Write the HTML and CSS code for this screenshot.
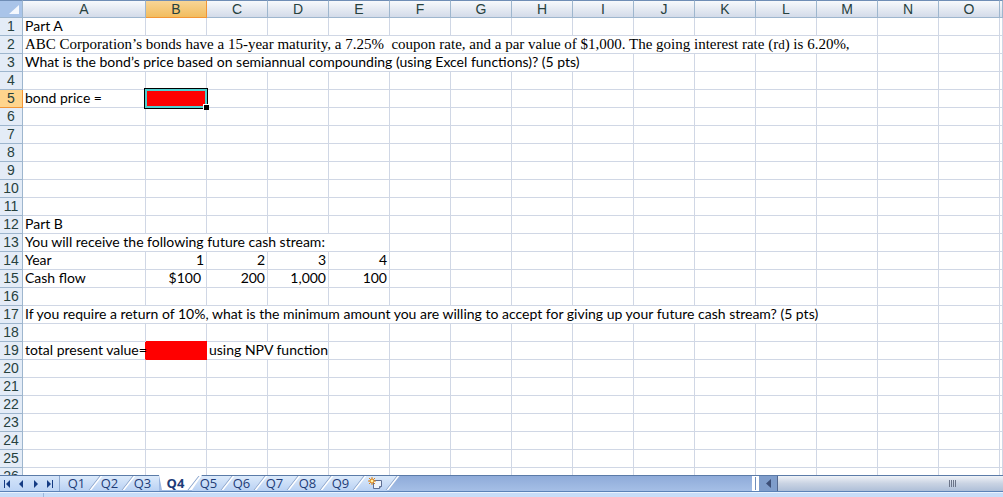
FILE: index.html
```
<!DOCTYPE html>
<html lang="en">
<head>
    <meta charset="UTF-8">
    <meta name="viewport" content="width=device-width, initial-scale=1.0">
    <title>Q4</title>
    <link rel="stylesheet" href="styles.css">
</head>
<body>
<div class="sheet">
    <table>
        <colgroup>
            <col class="col-num">
            <col class="col-first">
            <col span="14" class="col-cell">
            <col>
        </colgroup>
        <thead>
        <tr id="columnHeads">
            <th class="corner"><svg viewBox="0 0 10 9"><path d="M10 0V9H0Z" fill="#f4f8fe"/></svg></th>
        </tr>
        </thead>
        <tbody id="sheetRows">
        <!-- Sheet rows will be inserted here -->
        </tbody>
    </table>
</div>

<div class="bottom-bar">
    <div class="tab-nav">
        <button aria-label="First sheet"><svg viewBox="0 0 8 8"><path d="M1 0h1v8H1zM7 0v8L3 4z"/></svg></button>
        <button aria-label="Previous sheet"><svg viewBox="0 0 8 8"><path d="M6 0v8L2 4z"/></svg></button>
        <button aria-label="Next sheet"><svg viewBox="0 0 8 8"><path d="M2 0v8l4-4z"/></svg></button>
        <button aria-label="Last sheet"><svg viewBox="0 0 8 8"><path d="M1 0v8l4-4zM6 0h1v8H6z"/></svg></button>
    </div>
    <div class="tabs">
        <button class="tab">Q1</button>
        <button class="tab">Q2</button>
        <button class="tab before-active">Q3</button>
        <button class="tab active">Q4</button>
        <button class="tab">Q5</button>
        <button class="tab">Q6</button>
        <button class="tab">Q7</button>
        <button class="tab">Q8</button>
        <button class="tab">Q9</button>
        <button class="tab new-tab" aria-label="Insert sheet">
            <svg viewBox="0 0 15 13">
                <path d="M5.500 3.500h8v6l-2 2h-6z" fill="#eef3fb" stroke="#5f6f94"/>
                <path d="M13.500 9.500h-2v2" fill="#b9c7e0" stroke="#5f6f94"/>
                <path d="M4 0v8M0 4h8M1 1l6 6M7 1l-6 6" stroke="#d9821c" fill="none"/>
                <circle cx="4" cy="4" r="2" fill="#fff3a8" stroke="#d9821c"/>
            </svg>
        </button>
    </div>
    <div class="scroll">
        <span class="splitter"></span>
        <button class="scroll-left" aria-label="Scroll left"><svg viewBox="0 0 5 9"><path d="M5 0v9L0 4.500z"/></svg></button>
        <div class="thumb"><span class="grip"></span></div>
    </div>
</div>
<div class="status-bar"><span></span></div>

<script>
    const columns = 'ABCDEFGHIJKLMNO'.split('').concat('');
    const selected = {row: 5, col: 1};

    // row number -> cells, keyed by column index
    const data = {
        1: {0: {text: 'Part A'}},
        2: {0: {text: 'ABC Corporation’s bonds have a 15-year maturity, a 7.25%&nbsp; coupon rate, and a par value of $1,000. The going interest rate (r<small>d</small>) is 6.20%,', span: 13, cls: 'serif'}},
        3: {0: {text: 'What is the bond’s price based on semiannual compounding (using Excel functions)? (5 pts)', span: 9}},
        5: {0: {text: 'bond price ='}, 1: {text: '<div class="selection"></div>', cls: 'red'}},
        12: {0: {text: 'Part B'}},
        13: {0: {text: 'You will receive the following future cash stream:', span: 5}},
        14: {0: {text: 'Year'}, 1: {text: '1', cls: 'num'}, 2: {text: '2', cls: 'num'}, 3: {text: '3', cls: 'num'}, 4: {text: '4', cls: 'num'}},
        15: {0: {text: 'Cash flow'}, 1: {text: '$100', cls: 'num money'}, 2: {text: '200', cls: 'num'}, 3: {text: '1,000', cls: 'num'}, 4: {text: '100', cls: 'num'}},
        17: {0: {text: 'If you require a return of 10%, what is the minimum amount you are willing to accept for giving up your future cash stream? (5 pts)', span: 13}},
        19: {0: {text: 'total present value=', cls: 'spill'}, 1: {text: '', cls: 'red'}, 2: {text: 'using NPV function', span: 2}}
    };

    const heads = document.getElementById('columnHeads');
    columns.forEach((name, i) => {
        heads.innerHTML += `<th class="${i === selected.col ? 'on' : ''}">${name}</th>`;
    });

    let rows = '';
    for (let r = 1; r <= 26; r++) {
        const cells = data[r] || {};
        rows += `<tr><th class="${r === selected.row ? 'on' : ''}">${r}</th>`;
        for (let c = 0; c < columns.length;) {
            const cell = cells[c] || {text: ''};
            const span = cell.span || 1;
            rows += `<td colspan="${span}" class="${cell.cls || ''}">${cell.text}</td>`;
            c += span;
        }
        rows += '</tr>';
    }
    document.getElementById('sheetRows').innerHTML = rows;
</script>
</body>
</html>
```
FILE: styles.css
```
* {
    box-sizing: border-box;
}

body {
    display: flex;
    flex-direction: column;
    height: 100vh;
    margin: 0;
    overflow: hidden;
    font-family: Lato, sans-serif;
    font-size: 14px;
    color: #000;
    background-color: #fff;
}

button {
    padding: 0;
    border: none;
    background: none;
    font: inherit;
    cursor: pointer;
}

svg {
    display: block;
}

.sheet {
    flex: 1;
    min-height: 0;
    overflow: hidden;
}

table {
    width: 100%;
    table-layout: fixed;
    border-collapse: separate;
    border-spacing: 0;
}

.col-num {
    width: 23px;
}

.col-first {
    width: 123px;
}

.col-cell {
    width: 61px;
}

th, td {
    height: 18px;
    padding: 0;
    border-right: 1px solid #d0d7e5;
    border-bottom: 1px solid #d0d7e5;
    line-height: 16px;
    white-space: nowrap;
    vertical-align: top;
}

th {
    font-family: "Liberation Sans", Arial, sans-serif;
    font-size: 14px;
    font-weight: normal;
    color: #27413e;
}

thead th {
    border-top: 1px solid #6f8db5;
    border-right-color: #9eb6ce;
    border-bottom-color: #9eb6ce;
    background: linear-gradient(#f7f9fc, #d3dbe9);
}

tbody th {
    border-right-color: #9eb6ce;
    border-bottom-color: #9eb6ce;
    background-color: #e4ecf7;
}

thead th.on {
    border-right-color: #f29536;
    border-bottom-color: #f29536;
    background: linear-gradient(#f8d596, #f2bd5f);
}

tbody th.on {
    border-right-color: #f29536;
    border-bottom-color: #f29536;
    background-color: #ffd58d;
}

thead th.corner {
    background: #a9c4e9;
}

.corner svg {
    width: 10px;
    height: 9px;
    margin: 4px 0 0 9px;
}

td {
    padding-left: 2px;
    text-align: left;
}

td.serif {
    font-family: "Liberation Serif", "Times New Roman", serif;
    font-size: 15px;
    line-height: 17px;
    vertical-align: bottom;
}

td small {
    font-size: 13px;
    line-height: 1;
}

td.num {
    padding-right: 2px;
    text-align: right;
}

td.money {
    padding-right: 5px;
}

td.red {
    position: relative;
    padding: 0;
    border-color: #f00;
    background-color: #f00;
    box-shadow: -1px 0 0 #f00, 0 -1px 0 #f00;
}

td.spill {
    position: relative;
    z-index: 1;
    border-right-color: transparent;
}

.selection {
    position: absolute;
    inset: -2px;
    border: 1px solid #000;
    box-shadow: inset 0 0 0 2px #4fd0d0;
}

.selection::after {
    content: "";
    position: absolute;
    right: -2px;
    bottom: -2px;
    width: 5px;
    height: 5px;
    border: 1px solid #fff;
    border-width: 1px 0 0 1px;
    background-color: #000;
}

.bottom-bar {
    display: flex;
    height: 17px;
    border-top: 1px solid #5b7ba8;
    border-bottom: 1px solid #5b82b8;
    background: linear-gradient(#8fabd9, #a5bfe6);
}

.tab-nav {
    display: flex;
    align-items: center;
    justify-content: space-around;
    width: 60px;
    padding-right: 2px;
    border-right: 1px solid #8aa6cf;
    background: linear-gradient(#d4e4f9, #bcd4f5);
}

.tab-nav svg {
    width: 8px;
    height: 8px;
    fill: #153c84;
}

.tabs {
    display: flex;
    font-family: "Open Sans", sans-serif;
    font-size: 13px;
}

.tab {
    position: relative;
    width: 33px;
    line-height: 15px;
    color: #1e3c78;
    background: linear-gradient(#dceafb, #b9d1f3);
}

.tab::after {
    content: "";
    position: absolute;
    z-index: 2;
    top: 0;
    right: -4px;
    width: 2px;
    height: 14px;
    border-left: 1px solid #7f9cc9;
    background-color: #fff;
    transform: skewX(-38deg);
}

.tab.before-active::after {
    display: none;
}

.tab.active {
    z-index: 1;
    font-weight: bold;
    background: none;
}

.tab.active::before {
    content: "";
    position: absolute;
    inset: -1px -10px 1px 0;
    z-index: -1;
    background-color: #fff;
    clip-path: polygon(0 0, 100% 0, 33px 100%, 3px 100%);
}

.new-tab {
    z-index: 1;
    background: none;
}

.new-tab::before {
    content: "";
    position: absolute;
    inset: 0 -8px 0 0;
    z-index: -1;
    background: linear-gradient(#dceafb, #b9d1f3);
    clip-path: polygon(0 0, 100% 0, 30px 100%, 0 100%);
}

.new-tab svg {
    width: 15px;
    height: 13px;
    margin-left: 11px;
}

.scroll {
    display: flex;
    width: 25%;
    margin-left: auto;
    background-color: #7f9dcb;
}

.splitter {
    width: 7px;
    border: 1px solid #fff;
    border-width: 1px 3px;
    background-color: #6f8ebd;
}

.scroll-left {
    width: 18px;
}

.scroll-left svg {
    width: 5px;
    height: 9px;
    margin: 0 auto;
    fill: #3d4f77;
}

.thumb {
    display: flex;
    flex: 1;
    align-items: center;
    justify-content: center;
    padding-left: 124px;
    border-left: 1px solid #53688f;
    background: linear-gradient(#eff2f7, #c9d3e3 50%, #aebfd8);
}

.grip {
    width: 7px;
    height: 7px;
    background: repeating-linear-gradient(90deg, #6b7488 0 1px, transparent 1px 2px);
}

.status-bar {
    height: 5px;
    border-top: 1px solid #eaf3ff;
    background-color: #c8ddf8;
}

.status-bar span {
    display: block;
    width: 44px;
    height: 4px;
    border-right: 1px solid #9bb7dc;
}
```
